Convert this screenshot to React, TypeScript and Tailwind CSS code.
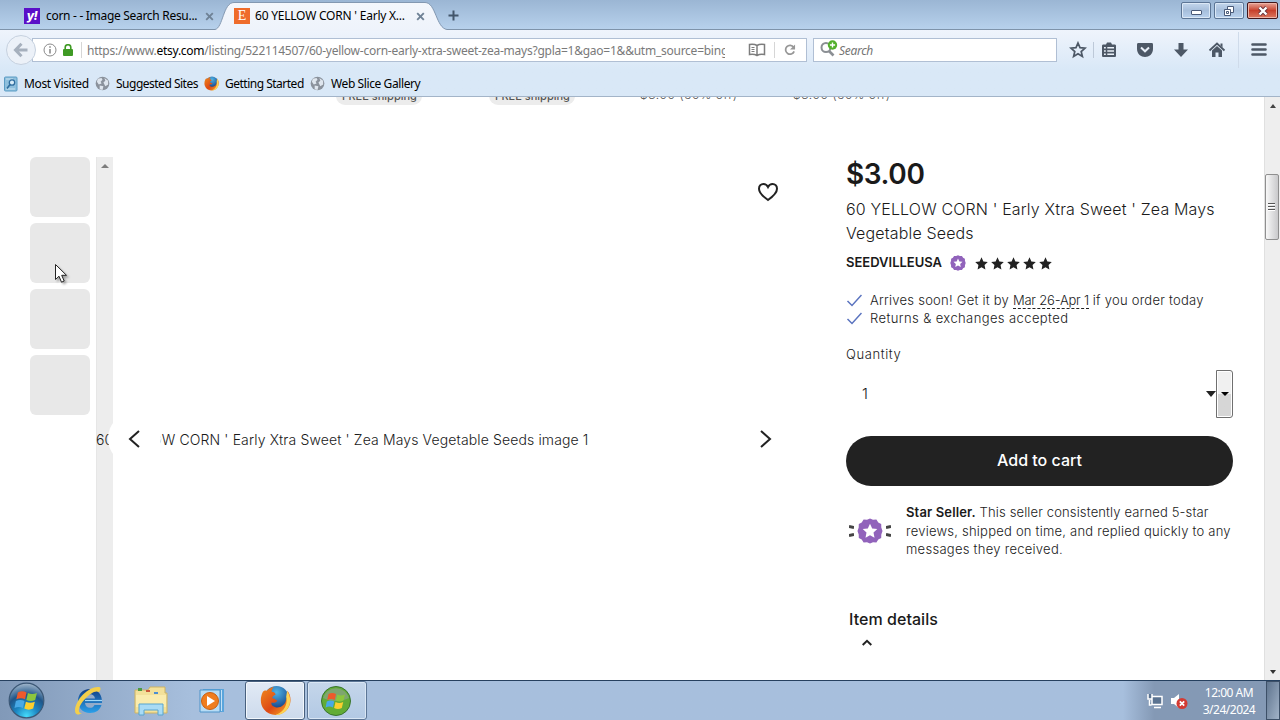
import type { ReactNode } from "react";

const UI = "font-['Noto_Sans','Open_Sans',sans-serif]";

const bookmarks = [
  { label: "Most Visited", icon: "visited", width: "w-[92px]", tracking: "tracking-[-0.35px]" },
  { label: "Suggested Sites", icon: "globe", width: "w-[108px]", tracking: "tracking-[-0.5px]" },
  { label: "Getting Started", icon: "firefox", width: "w-[107px]", tracking: "tracking-[-0.5px]" },
  { label: "Web Slice Gallery", icon: "globe", width: "w-[120px]", tracking: "tracking-[-0.4px]" },
];

function Firefox({ size }: { size: number }) {
  return (
    <svg className="shrink-0" width={size} height={size} viewBox="0 0 32 32">
      <defs>
        <radialGradient id="ffBlue" cx="50%" cy="25%" r="70%">
          <stop offset="0" stopColor="#4fb4e6" />
          <stop offset="1" stopColor="#123a80" />
        </radialGradient>
        <linearGradient id="ffFox" x1="0" y1="0" x2="1" y2="1">
          <stop offset="0" stopColor="#f08a1d" />
          <stop offset="0.55" stopColor="#dd4814" />
          <stop offset="1" stopColor="#f9b52a" />
        </linearGradient>
      </defs>
      <circle cx="17" cy="14" r="13" fill="url(#ffBlue)" />
      <path d="M3 7c-3 6-3 13 1 18 6 8 19 8 25-1 4-6 3-14-1-18 1 4 0 7-1 9-1 6-6 9-11 8-3-1-5-3-4-5 2 1 5 0 6-2-2 0-2-2-5-2-1-2 1-3 3-4 0-2-2-3-4-3 0-2 1-4 2-5-4 1-5 2-7 4-2-1-3 0-4 1z" fill="url(#ffFox)" />
      <path d="M28 6c5 7 4 17-3 22-3 2-6 3-9 3 8-3 13-10 11-19z" fill="#fcd354" />
    </svg>
  );
}

function Globe() {
  return (
    <svg className="-ml-px shrink-0" width="15" height="15" viewBox="0 0 16 16">
      <circle cx="8" cy="8" r="7.3" fill="#8b929c" />
      <path d="M3 3l4-1 1 2-2 2 1 2-3 1-2-3zM10 2l4 3 0 4-3 2-2-4 2-2zM5 10l4 1-1 4-3-1z" fill="#dfe6ee" />
    </svg>
  );
}

function BookmarkIcon({ icon }: { icon: string }) {
  if (icon === "firefox") return <Firefox size={15} />;
  if (icon === "globe") return <Globe />;
  return (
    <svg width="14" height="16" viewBox="0 0 14 16">
      <rect x="0.5" y="1" width="12.5" height="14" rx="1" fill="#8ebfdd" stroke="#5b9cc4" />
      <path d="M2 3h7M2 13h9" stroke="#c8e2f0" />
      <circle cx="8" cy="6.5" r="2.7" fill="#d7ecf8" stroke="#2f6d9e" strokeWidth="1.3" />
      <path d="M6 8.5l-3 4" stroke="#2f6d9e" strokeWidth="1.5" />
    </svg>
  );
}

function CloseX() {
  return (
    <svg width="9" height="9" viewBox="0 0 9 9">
      <path d="M1.2 1.2l6.6 6.6M7.8 1.2L1.2 7.8" stroke="#6f8296" strokeWidth="1.9" />
    </svg>
  );
}

function TabBar() {
  return (
    <div className="flex h-[30px] items-start bg-gradient-to-b from-[#9bb6d4] to-[#b7d1ec] border-b border-[#7e93aa]">
      <div className="flex h-8 w-[215px] shrink-0 items-center pl-6">
        <div className="flex size-4 items-center justify-center bg-[#5a0fc8]">
          <span className="text-[12px] leading-none font-extrabold italic text-white font-['Inter',sans-serif] tracking-[-0.5px]">y!</span>
        </div>
        <span className="ml-1.5 w-[159px] whitespace-nowrap text-[12px] tracking-[-0.3px]">corn - - Image Search Resu...</span>
        <CloseX />
      </div>
      <div className="relative flex h-8 w-[232px] shrink-0 items-center pl-[19px]">
        <svg className="absolute left-0 top-0" width="232" height="31" viewBox="0 0 232 31">
          <defs>
            <linearGradient id="tabFill" x1="0" y1="0" x2="0" y2="1">
              <stop offset="0" stopColor="#f4f7fc" />
              <stop offset="1" stopColor="#eef3fb" />
            </linearGradient>
          </defs>
          <path d="M0 31V29.5C8 28 8 2.500 19 2.500H210C221 2.500 221 28 232 29.500V31z" fill="url(#tabFill)" />
          <path d="M0 29.500C8 28 8 2.500 19 2.500H210C221 2.500 221 28 232 29.500" fill="none" stroke="#8398b1" />
        </svg>
        <div className="relative flex size-4 items-center justify-center bg-[#ef6c2b]">
          <span className="text-[14px] leading-none text-white font-['Liberation_Serif',serif]">E</span>
        </div>
        <span className="relative ml-[5px] w-[161px] whitespace-nowrap text-[12px] tracking-[-0.22px]">60 YELLOW CORN ' Early X...</span>
        <span className="relative"><CloseX /></span>
      </div>
      <svg className="mt-2.5 ml-px" width="11" height="11" viewBox="0 0 11 11">
        <path d="M5.500 0.500v10M0.500 5.500h10" stroke="#43566b" strokeWidth="2" />
      </svg>
      <div className="mt-0.5 mr-0.5 ml-auto flex gap-[3px]">
        <div className="flex h-[17px] w-[30px] items-center justify-center rounded-[2px] border border-[#5c7595] bg-gradient-to-b from-[#c3d6ec] via-[#a6bedb] to-[#b9d2ee] shadow-[inset_0_0_0_1px_#dbe8f6]">
          <span className="mt-1 h-[5px] w-[11px] rounded-[1px] border border-[#4a5a78] bg-white" />
        </div>
        <div className="flex h-[17px] w-[30px] items-center justify-center rounded-[2px] border border-[#5c7595] bg-gradient-to-b from-[#c3d6ec] via-[#a6bedb] to-[#b9d2ee] shadow-[inset_0_0_0_1px_#dbe8f6]">
          <svg width="12" height="12" viewBox="0 0 12 12" fill="#fff" stroke="#4a5a78">
            <path d="M4.500 1.500h6v6h-6z" />
            <path d="M1.500 4.500h6v6h-6z" />
            <path d="M3.500 6.500h2v2h-2z" />
          </svg>
        </div>
        <div className="flex h-[17px] w-[31px] items-center justify-center rounded-[2px] border border-[#43161a] bg-gradient-to-b from-[#e5a397] via-[#c7402c] to-[#dc7760] shadow-[inset_0_0_0_1px_#eeb5a8]">
          <svg width="12" height="10" viewBox="0 0 12 10">
            <path d="M2.500 1.500l7 7M9.500 1.500l-7 7" stroke="#64313a" strokeWidth="4" />
            <path d="M2.500 1.500l7 7M9.500 1.500l-7 7" stroke="#fff" strokeWidth="2.400" />
          </svg>
        </div>
      </div>
    </div>
  );
}

function Tool({ children, className = "" }: { children: ReactNode; className?: string }) {
  return (
    <svg className={`shrink-0 ${className}`} width="18" height="18" viewBox="0 0 18 18" fill="none" stroke="#4d5866" strokeWidth="2">
      {children}
    </svg>
  );
}

function NavBar() {
  return (
    <div className="flex h-10 items-center pl-1.5">
      <div className="z-10 flex size-[30px] shrink-0 items-center justify-center rounded-full border border-[#c6d1df] bg-[#ecf1f8]">
        <svg width="16" height="16" viewBox="0 0 16 16" fill="none" stroke="#a6b0bd" strokeWidth="3">
          <path d="M14.500 8H3M8.500 1.800L2.500 8l6 6.200" />
        </svg>
      </div>
      <div className="-ml-1 flex h-6 w-[775px] shrink-0 items-center border border-[#b0bfd4] bg-white pl-2.5">
        <svg width="14" height="14" viewBox="0 0 14 14" fill="none" stroke="#8b8b8b">
          <circle cx="7" cy="7" r="6" />
          <path d="M7 6v4.500M7 3.300v1.500" strokeWidth="1.600" />
        </svg>
        <svg className="ml-[6px]" width="10" height="12" viewBox="0 0 10 12">
          <path d="M2.200 6V3.500a2.800 2.800 0 0 1 5.600 0V6" fill="none" stroke="#3f9a24" strokeWidth="1.600" />
          <rect y="5" width="10" height="7" rx="1" fill="#3f9a24" />
        </svg>
        <span className="ml-2 h-4 w-px bg-[#d6d6d6]" />
        <span className="ml-[5px] w-[638px] overflow-hidden whitespace-nowrap pt-0.5 text-[12px] text-[#7a7a7a] tracking-[-0.25px]">
          https://www.<span className="text-black">etsy.com</span>/listing/522114507/60-yellow-corn-early-xtra-sweet-zea-mays?gpla=1&amp;gao=1&amp;&amp;utm_source=bing
        </span>
        <svg className="ml-[23px]" width="18" height="14" viewBox="0 0 18 14" fill="none" stroke="#7d7d7d" strokeWidth="1.500">
          <path d="M9 12.500V2.500C7 1.200 4 1.200 1.500 1.500v10C4 11 7 11.300 9 12.500c2-1.200 5-1.500 7.500-1v-10C14 1.200 11 1.200 9 2.500" />
          <path d="M3.500 4.500h3M3.500 6.500h3M3.500 8.500h3" strokeWidth="1" />
        </svg>
        <span className="ml-2 h-4 w-px bg-[#d6d6d6]" />
        <svg className="ml-[9px]" width="12" height="12" viewBox="0 0 13 13">
          <path d="M10.500 3.500A4.800 4.800 0 1 0 11 8" fill="none" stroke="#979797" strokeWidth="1.900" />
          <path d="M12 0.500V6H6.500z" fill="#979797" />
        </svg>
      </div>
      <div className="ml-1.5 flex h-6 w-[244px] shrink-0 items-center border border-[#b0bfd4] bg-white pl-1.5">
        <svg className="-mt-0.5" width="18" height="18" viewBox="0 0 18 18">
          <circle cx="6" cy="7.500" r="4.500" fill="none" stroke="#8b8f94" strokeWidth="2" />
          <path d="M9 11l4.500 4.500" stroke="#8b8f94" strokeWidth="2.600" />
          <circle cx="12.500" cy="5" r="4.700" fill="#53b02c" />
          <path d="M12.500 2.400v5.200M9.900 5h5.200" stroke="#fff" strokeWidth="1.400" />
        </svg>
        <span className="ml-px pt-0.5 text-[12px] italic text-[#757575] tracking-[-0.3px]">Search</span>
      </div>
      <Tool className="ml-[12px]"><path d="M9 2l2 4.700 5 .5-3.800 3.300 1.200 5L9 12.800 4.600 15.500l1.200-5L2 7.200l5-.5z" strokeWidth="1.700" /></Tool>
      <span className="ml-1.5 h-4 w-px bg-[#bdc9d8]" />
      <Tool className="ml-1.5">
        <path d="M3.500 3.500H6L7 1.500h4l1 2h2.500c1 0 1.500.5 1.500 1.500v9.500c0 1-.5 1.500-1.500 1.500h-11C2.500 16 2 15.500 2 14.500V5c0-1 .5-1.500 1.500-1.500z" fill="#4d5866" stroke="none" />
        <path d="M4 6.800h1.800M7.300 6.800H14M4 10h1.800M7.300 10H14M4 13.200h1.800M7.300 13.200H14" stroke="#eaf1f9" strokeWidth="1.600" />
      </Tool>
      <Tool className="ml-[18px]">
        <path d="M1 3.500C1 2.500 1.500 2 2.500 2h13c1 0 1.500.5 1.500 1.500V8c0 5-4 8-8 8S1 13 1 8z" fill="#4d5866" stroke="none" />
        <path d="M5 6.500l4 3.800 4-3.800" stroke="#e8eff8" />
      </Tool>
      <Tool className="ml-[18px]"><path d="M6.500 2h5v6.500H16L9 16 2 8.500h4.500z" fill="#4d5866" stroke="none" /></Tool>
      <Tool className="ml-[18px]">
        <path d="M1.500 9.500L9 2.500l7.500 7" strokeWidth="1.800" />
        <path d="M4 9.500L9 5l5 4.500V16h-3.500v-4.500h-3V16H4zM12.500 2.500h2v4l-2-2z" fill="#4d5866" stroke="none" />
      </Tool>
      <span className="ml-3 h-9 w-px bg-[#cfdbea]" />
      <svg className="ml-3" width="16" height="13" viewBox="0 0 16 13" stroke="#4d5866" strokeWidth="2.600" strokeLinecap="round">
        <path d="M1.500 1.500h13M1.500 6.500h13M1.500 11.500h13" />
      </svg>
    </div>
  );
}

function Star({ size, fill }: { size: number; fill: string }) {
  return (
    <svg width={size} height={size} viewBox="0 0 20 20">
      <path d="M10 .5l2.900 6.300 6.800.8-5 4.700 1.300 6.800L10 15.700 4 19.100l1.300-6.800-5-4.700 6.800-.8z" fill={fill} />
    </svg>
  );
}

function Badge({ size }: { size: number }) {
  return (
    <svg width={size} height={size} viewBox="0 0 26 26">
      <path d="M13 .5l3 1.300 3.400-.2 1.900 2.800 2.900 1.700.1 3.400L25.500 13l-1.200 3.500-.1 3.400-2.900 1.700-1.900 2.800-3.400-.2-3 1.300-3-1.300-3.400.2-1.900-2.800-2.900-1.700-.1-3.400L.5 13l1.200-3.500.1-3.400 2.900-1.700 1.900-2.800 3.400.2z" fill="#9163bb" />
      <path d="M13 5.800l2.200 4.700 5.100.6-3.800 3.500 1 5.100-4.500-2.500-4.500 2.500 1-5.100-3.800-3.500 5.100-.6z" fill="#fff" />
    </svg>
  );
}

function Check() {
  return (
    <svg width="16" height="13" viewBox="0 0 16 13" fill="none" stroke="#5a73bf" strokeWidth="1.500">
      <path d="M1.500 7l4.500 4.500L15.500 1" />
    </svg>
  );
}

function Gallery() {
  return (
    <div className="flex">
      <div className="flex w-[60px] flex-col gap-1.5">
        {[1, 2, 3, 4].map((n) => (
          <div key={n} className="h-[60px] rounded-md bg-[#e8e8e8]" />
        ))}
      </div>
      <div className="relative ml-1.5 h-[523px] w-[710px]">
        <div className="flex h-full w-[17px] justify-center border-l border-[#e6e6e6] bg-[#ededed] pt-[7px]">
          <span className="h-0 border-x-[4px] border-b-4 border-x-transparent border-b-[#7d7d7d]" />
        </div>
        <p className="absolute top-[272px] left-0 whitespace-nowrap text-[14px] leading-[22px] tracking-[0.13px]">
          60 YELLOW CORN ' Early Xtra Sweet ' Zea Mays Vegetable Seeds image 1
        </p>
        <button className="absolute top-[255px] left-[12px] flex size-[53px] items-center justify-center rounded-full bg-white pr-0.5">
          <svg width="12" height="18" viewBox="0 0 12 18" fill="none" stroke="#222" strokeWidth="2"><path d="M11 1L2 9l9 8" /></svg>
        </button>
        <button className="absolute top-[255px] left-[643px] flex size-[53px] items-center justify-center rounded-full bg-white">
          <svg width="12" height="18" viewBox="0 0 12 18" fill="none" stroke="#222" strokeWidth="2"><path d="M1 1l9 8-9 8" /></svg>
        </button>
        <svg className="absolute top-[25px] left-[661px]" width="22" height="20" viewBox="0 0 22 20" fill="none" stroke="#222" strokeWidth="2">
          <path d="M11 18C6 14.500 2 11 2 6.800 2 3.800 4 2 6.400 2 8.500 2 10 3 11 5c1-2 2.500-3 4.600-3C18 2 20 3.800 20 6.800 20 11 16 14.500 11 18z" />
        </svg>
      </div>
    </div>
  );
}

function BuyBox() {
  return (
    <div className="ml-10 w-[387px]">
      <p className="pt-px text-[28px] leading-8 font-semibold tracking-[-0.4px]">$3.00</p>
      <h1 className="mt-[7px] text-[16px] leading-6 tracking-[0.15px]">
        60 YELLOW CORN ' Early Xtra Sweet ' Zea Mays<br />Vegetable Seeds
      </h1>
      <div className="mt-[9px] flex h-[18px] items-center">
        <span className="w-[104px] text-[13px] font-semibold">SEEDVILLEUSA</span>
        <Badge size={16} />
        <div className="ml-[9px] flex gap-[3px]">
          {[1, 2, 3, 4, 5].map((n) => <Star key={n} size={13} fill="#222" />)}
        </div>
      </div>
      <ul className="mt-[19px] text-[13px] leading-[18px]">
        <li className="flex items-center gap-2 whitespace-nowrap">
          <Check />
          <span className="tracking-[0.24px]">
            Arrives soon! Get it by <span className="border-b border-dashed border-[#222] tracking-[-0.2px]">Mar 26-Apr 1</span> if you order today
          </span>
        </li>
        <li className="flex items-center gap-2 tracking-[0.4px]"><Check />Returns &amp; exchanges accepted</li>
      </ul>
      <p className="mt-[18px] text-[13px] leading-[18px] tracking-[0.6px]">Quantity</p>
      <div className="mt-[7px] flex h-12 items-center pl-4">
        <span className="text-[15px]">1</span>
        <span className="ml-auto h-0 border-x-[5px] border-t-[6px] border-x-transparent border-t-[#222]" />
        <div className="flex h-12 w-[17px] items-center justify-center rounded-r-[3px] border border-[#6f6f6f] bg-gradient-to-b from-[#f0f0f0] from-50% to-[#d6d6d6] to-50% shadow-[inset_0_0_0_1px_#fff]">
          <span className="h-0 border-x-[4px] border-t-4 border-x-transparent border-t-black" />
        </div>
      </div>
      <button className="mt-[18px] h-[50px] w-full rounded-full bg-[#222] pb-0.5 text-[16px] font-medium text-white">Add to cart</button>
      <div className="mt-[17px] flex items-center">
        <div className="flex w-[60px] shrink-0 items-center pl-[3px]">
          <svg width="5" height="14" viewBox="0 0 5 14" stroke="#444" strokeWidth="3"><path d="M0 2.500l5 1M0 11.500l5-1" /></svg>
          <span className="mx-[3px]"><Badge size={26} /></span>
          <svg width="5" height="14" viewBox="0 0 5 14" stroke="#444" strokeWidth="3"><path d="M5 2.500l-5 1M5 11.500l-5-1" /></svg>
        </div>
        <p className="text-[13px] leading-[18.500px] whitespace-nowrap">
          <span className="block tracking-[0.14px]"><b className="font-semibold">Star Seller.</b> This seller consistently earned 5-star</span>
          <span className="block tracking-[0.23px]">reviews, shipped on time, and replied quickly to any</span>
          <span className="block tracking-[0.27px]">messages they received.</span>
        </p>
      </div>
      <div className="mt-12 pl-[3px]">
        <h2 className="text-[16px] leading-6 font-medium tracking-[0.05px]">Item details</h2>
        <svg className="mt-2 ml-[13px]" width="10" height="7" viewBox="0 0 10 7" fill="none" stroke="#222" strokeWidth="2"><path d="M.700 6L5 1.800 9.300 6" /></svg>
      </div>
    </div>
  );
}

function Page() {
  return (
    <div className="flex h-[583px] bg-white">
      <main className="w-[1264px] overflow-hidden font-['Inter',sans-serif] font-[350] text-[#1a1a1a]">
        <div className="flex h-[60px] items-start pl-[336px] text-[12px] leading-[18px] whitespace-nowrap text-[#555]">
          <span className="-mt-2.5 mr-[67px] w-[86px] rounded-full bg-[#ececec] pl-1.5 text-[11px] font-medium">FREE shipping</span>
          <span className="-mt-2.5 mr-[65px] w-[86px] rounded-full bg-[#ececec] pl-1.5 text-[11px] font-medium">FREE shipping</span>
          <span className="-mt-[11px] w-[153px] tracking-[0.6px]">$3.00 (50% off)</span>
          <span className="-mt-[11px] tracking-[0.6px]">$3.00 (50% off)</span>
        </div>
        <div className="flex pl-[30px]">
          <Gallery />
          <BuyBox />
        </div>
      </main>
      <div className="flex w-4 flex-col items-center border-l border-[#e0e0e0] bg-[#eeeeee]">
        <span className="mt-[7px] h-0 border-x-[3px] border-b-4 border-x-transparent border-b-[#444]" />
        <div className="mt-[66px] -ml-0.5 flex h-[66px] w-[14px] flex-col items-center justify-center gap-px rounded-[2px] border border-[#8f8f8f] bg-gradient-to-r from-[#f8f8f8] to-[#c9c9cb]">
          {[1, 2, 3].map((n) => <span key={n} className="h-0.5 w-[7px] border-t border-[#555] bg-white" />)}
        </div>
        <span className="mt-auto mb-[6px] h-0 border-x-[3px] border-t-4 border-x-transparent border-t-[#333]" />
      </div>
    </div>
  );
}

function WindowsFlag() {
  return (
    <g>
      <path d="M8.500 9c2.500-1.300 5-1.300 7.500 0l-1.300 6c-2.300-1.200-4.800-1.200-7.500 0z" fill="#ee5a2b" />
      <path d="M17.200 9.500c2.500 1.200 5 1.200 7.800 0l-1.500 6c-2.500 1.200-5.200 1.200-7.600 0z" fill="#8cc63e" />
      <path d="M6.800 16.500c2.500-1.300 5-1.200 7.500 0l-1.400 6c-2.300-1.200-4.800-1.200-7.300 0z" fill="#48a9e6" />
      <path d="M15.500 17c2.500 1.200 5 1.200 7.700 0l-1.400 6c-2.600 1.200-5.200 1.200-7.700 0z" fill="#fbcf2f" />
    </g>
  );
}

function Taskbar() {
  return (
    <footer className="flex h-10 items-center border-t border-[#26405f] bg-gradient-to-r from-[#8199b8] via-[#a7bfdd] via-15% to-[#a7bfdd]">
      <svg className="ml-2 shrink-0" width="37" height="37" viewBox="0 0 32 32">
        <defs>
          <radialGradient id="orb" cx="50%" cy="95%" r="95%">
            <stop offset="0" stopColor="#45dcfb" />
            <stop offset="0.35" stopColor="#1c86c2" />
            <stop offset="0.65" stopColor="#1f5588" />
            <stop offset="1" stopColor="#a3b8cd" />
          </radialGradient>
        </defs>
        <circle cx="16" cy="16" r="15" fill="url(#orb)" stroke="#3c5876" />
        <WindowsFlag />
      </svg>
      <svg className="ml-[27px] shrink-0" width="32" height="32" viewBox="0 0 32 32" fill="none">
        <defs>
          <linearGradient id="ie" x1="0" y1="0" x2="0" y2="1">
            <stop offset="0" stopColor="#123f86" />
            <stop offset="1" stopColor="#2aa0ea" />
          </linearGradient>
        </defs>
        <path d="M18 4C10.500 4 6 9.500 6 16s4.500 12 12 12c6 0 10-3 11.500-8h-7c-1 2-2.300 2.800-4.500 2.800-3 0-4.700-1.800-5-4.800h17C30.500 10 26 4 18 4zm-5 9.500c.5-2.700 2.200-4.300 5-4.300 2.900 0 4.700 1.600 5 4.300z" fill="url(#ie)" />
        <path d="M13 15.500h17" stroke="#9fd8f8" strokeWidth="1.200" />
        <path d="M27 2C17 1 4 14 3 25c0 6 4 5 7 3-5 1-4-7 3-14 5-5 10-9 14-7 2-2 2-5 0-5z" fill="#f3cf4b" />
      </svg>
      <svg className="ml-[30px] shrink-0" width="34" height="30" viewBox="0 0 34 30">
        <path d="M1 4h13l2-3h15v6h2v20H1z" fill="#f3e19a" stroke="#cdb365" />
        <path d="M4 2h4v3H4z" fill="#4c9b45" />
        <path d="M12 4h4v2h-4z" fill="#cc5a3a" />
        <path d="M20 6h4v2h-4z" fill="#4d8fd0" />
        <path d="M2 9h30v12H2z" fill="#faecae" />
        <path d="M5 29V18h24v11h-5v-5H10v5z" fill="#a9dbf5" stroke="#58a5cf" />
      </svg>
      <svg className="ml-[30px] shrink-0" width="30" height="28" viewBox="0 0 30 28">
        <path d="M5 2h21v23H5z" fill="#5aa5dc" />
        <path d="M23.500 3v21" stroke="#c4e2f7" />
        <path d="M2 3h20v22H2z" fill="#b7dcf5" stroke="#4c93c9" />
        <circle cx="12" cy="14" r="8.500" fill="#ef7d1f" stroke="#c95f11" />
        <path d="M9 9l8 5-8 5z" fill="#fff" />
      </svg>
      <div className="ml-[17px] flex h-[39px] w-[60px] shrink-0 items-center justify-center rounded-[3px] border border-[#48607e] bg-gradient-to-b from-[#e2eaf5] to-[#ccdaec] shadow-[inset_0_0_0_1px_#f2f7fc]">
        <Firefox size={31} />
      </div>
      <div className="ml-0.5 flex h-[39px] w-[60px] shrink-0 items-center justify-center rounded-[3px] border border-[#5c7696] bg-gradient-to-b from-[#c5d6ea] to-[#b2c9e4] shadow-[inset_0_0_0_1px_#d9e6f4]">
        <svg className="-ml-0.5" width="32" height="32" viewBox="0 0 32 32">
          <circle cx="16" cy="16" r="14.500" fill="#62ac35" stroke="#39732f" />
          <path d="M3 13a13.500 13.500 0 0 1 26 0c-8 4-18 4-26 0z" fill="#7ea570" />
          <WindowsFlag />
        </svg>
      </div>
      <div className="ml-auto flex h-full w-[157px] items-center bg-gradient-to-r from-[#a7bfdd] to-[#8499b5] to-20%">
        <svg className="ml-6" width="16" height="16" viewBox="0 0 16 16" fill="none" stroke="#fff" strokeWidth="1.500">
          <path d="M5 3.500h10v8H5zM7 14.500h7M2.500 7v5h2M1 1v5h4V1" fill="#5b7391" />
        </svg>
        <svg className="ml-2" width="17" height="16" viewBox="0 0 17 16">
          <path d="M0 5h3l5-4v14l-5-4H0z" fill="#fff" />
          <circle cx="11" cy="10.500" r="5.500" fill="#d33b33" />
          <path d="M8.800 8.300l4.400 4.400M13.200 8.300l-4.400 4.400" stroke="#fff" strokeWidth="1.700" />
        </svg>
        <div className="ml-3 w-[58px] text-center text-[12px] leading-[17px] whitespace-nowrap text-white tracking-[-0.5px]">
          <p>12:00 AM</p>
          <p>3/24/2024</p>
        </div>
        <div className="ml-auto h-full w-[14px] border border-[#3d5068] bg-gradient-to-br from-[#60758f] to-[#a2b3c8]" />
      </div>
    </footer>
  );
}

export default function App() {
  return (
    <div className={`relative flex h-[720px] w-[1280px] flex-col overflow-hidden text-black ${UI}`}>
      <TabBar />
      <div className="flex h-[67px] flex-col border-b border-[#a3b4c8] bg-gradient-to-b from-[#eff4fc] to-[#d9e8f7] to-60%">
        <NavBar />
        <div className="flex h-[27px] items-center pt-0.5 pl-1">
          {bookmarks.map((b) => (
            <div key={b.label} className={`flex shrink-0 items-center gap-1.5 whitespace-nowrap text-[12px] ${b.width} ${b.tracking}`}>
              <BookmarkIcon icon={b.icon} />
              {b.label}
            </div>
          ))}
        </div>
      </div>
      <Page />
      <Taskbar />
      <svg className="absolute top-[263px] left-[54px] drop-shadow-[2px_2px_1px_rgba(0,0,0,0.3)]" width="14" height="22" viewBox="0 0 14 22">
        <path d="M1.500 1.500v15l3.500-3.300 2.500 6 2.700-1.200-2.500-5.700h4.800z" fill="#fff" stroke="#222" />
      </svg>
    </div>
  );
}
